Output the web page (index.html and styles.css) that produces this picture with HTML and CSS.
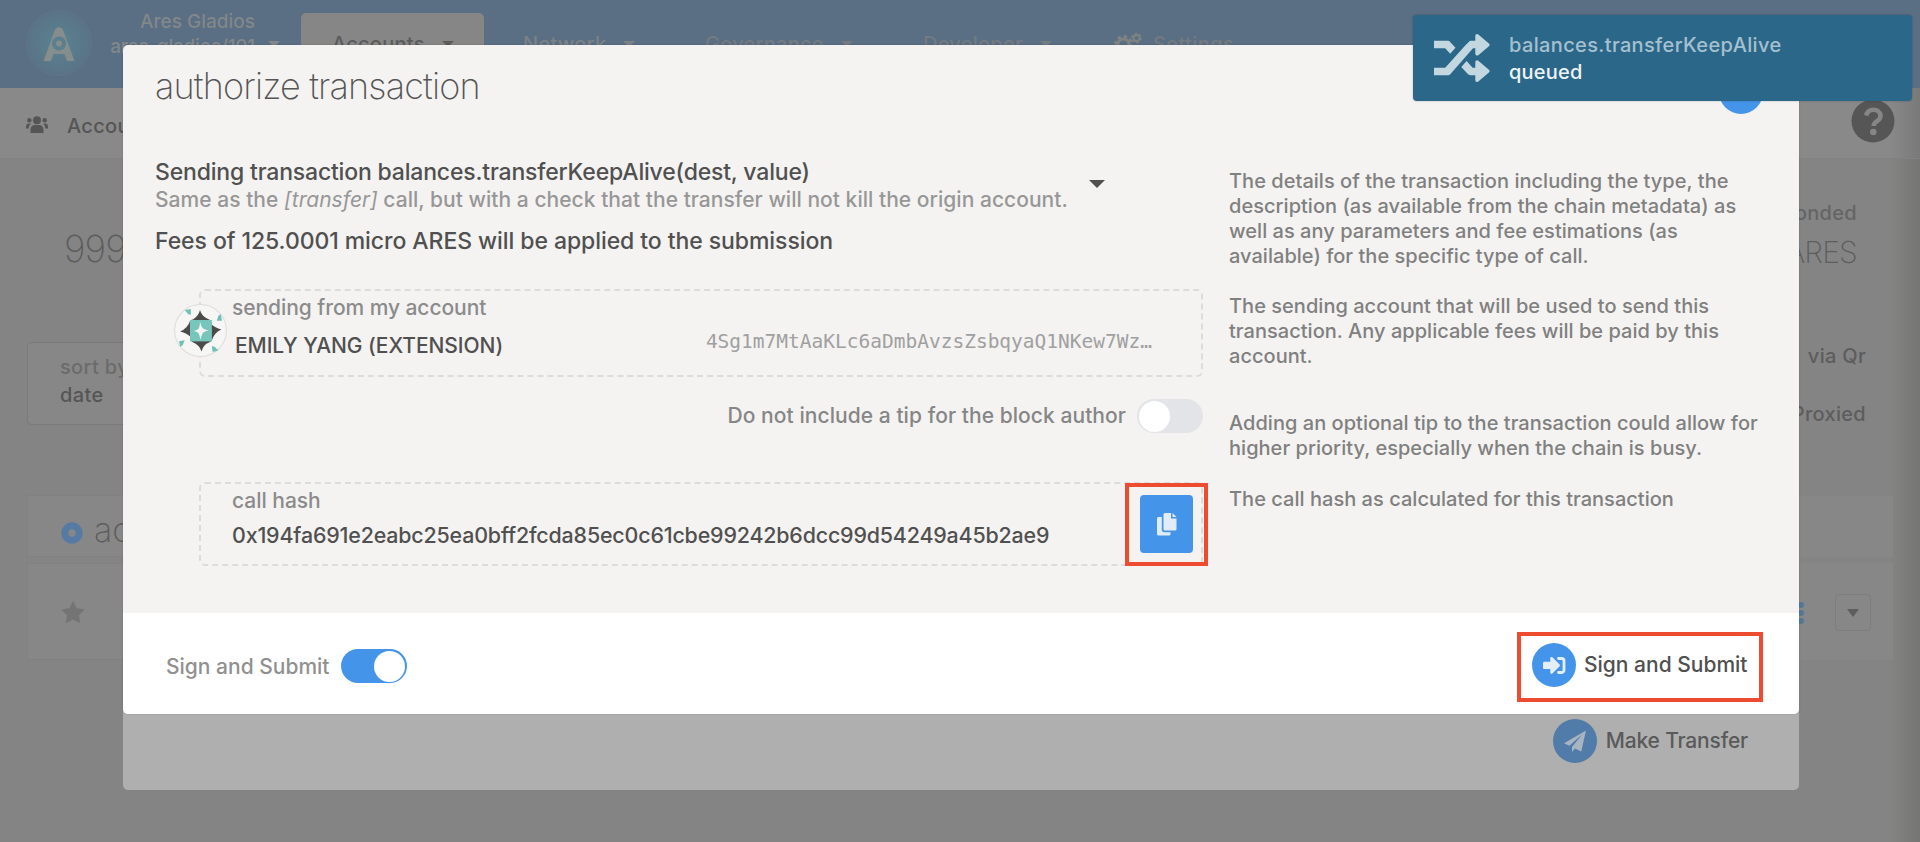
FILE: index.html
```html
<!DOCTYPE html>
<html lang="en">
<head>
<meta charset="utf-8">
<title>authorize transaction</title>
<link rel="stylesheet" href="styles.css">
</head>
<body>
<div class="stage">
  <div class="page">
    <header class="topbar">
      <svg class="logo" viewBox="0 0 66 66"><defs><radialGradient id="lg"><stop offset="0" stop-color="#5a8391"/><stop offset=".6" stop-color="#597a8b"/><stop offset="1" stop-color="#5b7287"/></radialGradient></defs><circle cx="33" cy="33" r="32.5" fill="url(#lg)" stroke="#64778a" stroke-width=".7"/><path d="M28.500 21c1.500-5 7.500-5 9 0L48.500 51H41l-2.500-7h-11L25 51H17.500z" fill="#868d8d"/><circle cx="33" cy="33.500" r="7" fill="#5a7f8f"/><circle cx="33" cy="33.500" r="3" fill="#868d8d"/></svg>
      <div class="chain"><div class="chain-name">Ares Gladios</div><div class="chain-spec">ares-gladios/101</div></div>
      <i class="caret chain-caret"></i>
      <nav class="menu">
        <div class="menu-item active"><span>Accounts</span><i class="caret"></i></div>
        <div class="menu-item network"><span>Network</span><i class="caret"></i></div>
        <div class="menu-item governance"><span>Governance</span><i class="caret"></i></div>
        <div class="menu-item developer"><span>Developer</span><i class="caret"></i></div>
        <div class="menu-item settings"><svg class="gears" viewBox="0 0 28 26" fill="none" stroke="#7f8381"><circle cx="9.500" cy="12.500" r="5.500" stroke-width="2.800"/><circle cx="9.500" cy="12.500" r="8" stroke-width="2.800" stroke-dasharray="3.400 2.880"/><circle cx="22.500" cy="6" r="3" stroke-width="1.800"/><circle cx="22.500" cy="6" r="4.500" stroke-width="1.600" stroke-dasharray="2.400 2.300"/></svg><span>Settings</span></div>
      </nav>
    </header>
    <div class="tabs">
      <svg class="people" viewBox="0 0 22 17" fill="#555"><circle cx="11" cy="4.300" r="4"/><circle cx="3.300" cy="4.200" r="2.200"/><circle cx="18.700" cy="4.200" r="2.200"/><path d="M4.500 17v-3.500a4.500 4.500 0 0 1 4.500-4.500h4a4.500 4.500 0 0 1 4.500 4.500V17zM0 12.500v-2.500A2.600 2.600 0 0 1 2.600 7.500h2.400c-1.500 1.300-2.300 3-2.300 5zM22 12.500v-2.500a2.600 2.600 0 0 0-2.600-2.500H17c1.500 1.300 2.300 3 2.300 5z"/></svg>
      <span class="tab-label">Accou</span>
      <svg class="help-icon" viewBox="0 0 44 44"><circle cx="22" cy="22" r="21.500" fill="#565656"/><path d="M15 16.500c1.500-4.500 4-5.800 7.300-5.800 4 0 7.200 2.500 7.200 6.200 0 5.500-6.800 5-6.800 10" fill="none" stroke="#868686" stroke-width="4.600"/><circle cx="22.300" cy="33" r="3.300" fill="#868686"/></svg>
    </div>
    <div class="content">
      <aside class="left">
        <div class="total">999</div>
        <div class="sort"><div class="sort-label">sort by</div><div class="sort-value">date</div></div>
        <div class="panel panel-head"><svg class="radio" viewBox="0 0 22 22"><circle cx="11" cy="11" r="7.200" fill="none" stroke="#557ba5" stroke-width="7"/></svg><span class="panel-title">ac</span></div>
        <div class="panel panel-row"><svg class="star" viewBox="0 0 24 23"><path d="M12 0l3.700 7.300 8.100 1.200-5.900 5.700 1.400 8.100L12 18.500l-7.300 3.800 1.400-8.100L.2 8.500l8.100-1.200z" fill="#747474"/></svg></div>
      </aside>
      <aside class="right">
        <div class="bonded-label">onded</div>
        <div class="bonded-value">ARES</div>
        <div class="via">via Qr</div>
        <div class="proxied">Proxied</div>
        <div class="panel panel-head"></div>
        <div class="panel panel-row right-row"><div class="dots"><b></b><b></b><b></b></div><div class="drop"><i class="caret"></i></div></div>
      </aside>
    </div>
  </div>

  <div class="back-modal">
    <svg class="round" viewBox="0 0 44 44"><circle cx="22" cy="22" r="22" fill="#517ba8"/><path d="M33 11.500L11 24.200l5.400 2.500L29 15.500 19 28v5l3-3.500 6.300 3z" fill="#a7b4c2"/></svg>
    <span>Make Transfer</span>
  </div>

  <main class="modal">
    <div class="modal-head"><h1>authorize transaction</h1><div class="close"></div></div>
    <div class="modal-body">
      <section class="call">
        <div class="summary">
          <div class="lead">Sending transaction balances.transferKeepAlive(dest, value)</div>
          <div class="desc">Same as the <em>[transfer]</em> call, but with a check that the transfer will not kill the origin account.</div>
          <div class="fees">Fees of 125.0001 micro ARES will be applied to the submission</div>
        </div>
        <i class="caret call-caret"></i>
      </section>
      <p class="help h1">The details of the transaction including the type, the<br>description (as available from the chain metadata) as<br>well as any parameters and fee estimations (as<br>available) for the specific type of call.</p>
      <section class="field account">
        <svg class="identicon" viewBox="0 0 52 52"><circle cx="26" cy="26" r="25.400" fill="#f6f6f5" stroke="#dcdcdc"/><path d="M25.500 6Q27 12.500 35 15.500L37 20Q40 23 46.500 25Q39.500 28 37 36L34 38Q29 39.500 27 46.500Q25 40 17.500 37L16 32Q13 29 6 27Q13.500 24 16 16L19 15Q24 12 25.500 6z" fill="#4b4b4b"/><rect x="15.700" y="15.700" width="21.500" height="21" fill="#77c5bb"/><path d="M25.500 17.500Q27 23 28.500 24Q30 25 34 26Q29 27 28 29Q27 31 26 35Q25 30 24 28.500Q22.500 27 19 26.500Q23.500 25.500 24.500 23.500Q25.500 21 25.500 17.500z" fill="#f4f4f3"/><path d="M10.500 6l6-1v5.500l-2.500-.5zM42 16.500l1.500-5 2.500-1.500 1 6.500zM5 36.500l5.500-1-2 5-2.500 1.500zM37 41.500l3 .5 3.500 3.500-5.500 1.500z" fill="#6fc1b7"/></svg>
        <div class="who"><div class="label">sending from my account</div><div class="name">EMILY YANG (EXTENSION)</div></div>
        <div class="address">4Sg1m7MtAaKLc6aDmbAvzsZsbqyaQ1NKew7Wz…</div>
      </section>
      <p class="help h2">The sending account that will be used to send this<br>transaction. Any applicable fees will be paid by this<br>account.</p>
      <section class="tip"><span>Do not include a tip for the block author</span><div class="toggle"><b></b></div></section>
      <p class="help h3">Adding an optional tip to the transaction could allow for<br>higher priority, especially when the chain is busy.</p>
      <section class="field hash">
        <div><div class="label">call hash</div><div class="hash-value">0x194fa691e2eabc25ea0bff2fcda85ec0c61cbe99242b6dcc99d54249a45b2ae9</div></div>
        <div class="copy-mark"><div class="copy"><svg viewBox="0 0 20 23" fill="#e1ecf8"><path d="M6.500 1.500A1.500 1.500 0 0 1 8 0h6v5.500h5.500V16a1.500 1.500 0 0 1-1.500 1.500H8A1.500 1.500 0 0 1 6.500 16zM15.500 0l4 4h-4z"/><path d="M4.800 4H1.500A1.500 1.500 0 0 0 0 5.500v15.500A1.500 1.500 0 0 0 1.500 22.500H12a1.500 1.500 0 0 0 1.500-1.500v-1.800H7.500A2.700 2.700 0 0 1 4.800 16.500z"/></svg></div></div>
      </section>
      <p class="help h4">The call hash as calculated for this transaction</p>
    </div>
    <footer class="modal-foot">
      <span class="mode">Sign and Submit</span><div class="toggle on"><b></b></div>
      <div class="submit"><svg class="round" viewBox="0 0 44 44"><circle cx="22" cy="22" r="22" fill="#4495ea"/><path d="M12.500 18.800h5.800v-3.600c0-1.300 1.300-1.700 2.100-.9l7.200 7.200c.6.600.6 1.200 0 1.800l-7.200 7.200c-.8.800-2.100.4-2.100-.9v-3.600h-5.800c-1 0-1.500-.5-1.500-1.500v-4.200c0-1 .5-1.500 1.500-1.500z" fill="#e3eefa"/><path d="M26.500 15.500h3.200a2.300 2.300 0 0 1 2.300 2.300v9.400a2.300 2.300 0 0 1-2.300 2.300h-3.200" fill="none" stroke="#e3eefa" stroke-width="2.800" stroke-linecap="round"/></svg><span>Sign and Submit</span></div>
    </footer>
  </main>

  <div class="toast">
    <svg class="shuffle" viewBox="0 0 56 48"><path d="M0 6.800h13.500c1.200 0 1.800.3 2.600 1.100l5.400 5.900-5.300 5.900-5-5.400H0zM0 33.700h11.200L31.200 11.500 34.800 7.900c.7-.8 1.500-1.100 2.500-1.100h4V2c0-2 2-2.600 3.300-1.300l10.300 8.800c1 .9 1 1.800 0 2.700l-10.300 8.800c-1.300 1.200-3.300.6-3.300-1.400v-5.300h-2.300L16.500 40c-.8.900-1.500 1.200-2.600 1.200H0zM27.300 33l5.300-5.900 6 6.600h2.700v-5.500c0-2 2-2.600 3.300-1.300l10.300 8.800c1 .9 1 1.800 0 2.700l-10.300 8.900c-1.300 1.200-3.300.6-3.300-1.400v-4.700h-5c-1 0-1.700-.3-2.500-1.100z" fill="#c3d7e1"/></svg>
    <div><div class="toast-title">balances.transferKeepAlive</div><div class="toast-status">queued</div></div>
  </div>
</div>
</body>
</html>
```
FILE: styles.css
```css
* { box-sizing: border-box; }
body { margin: 0; overflow: hidden; font-family: Inter, "Liberation Sans", sans-serif; font-size: 21px; font-weight: 450; color: #505050; }
h1, p { margin: 0; font-weight: inherit; }
svg { display: block; flex: none; }
.stage { display: grid; grid-template: 842px / 1920px; }
.stage > * { grid-area: 1 / 1; }
.caret { flex: none; width: 0; height: 0; border: solid transparent; border-width: 6px 6px 0; border-top-color: currentColor; }

/* dimmed application page */
.page { background: linear-gradient(90deg, #848484 1890px, #757572 1920px); white-space: nowrap; }
.topbar { display: flex; height: 88px; background: #5a6e84; color: #82878a; padding-left: 26px; }
.logo { width: 66px; height: 66px; margin-top: 10px; }
.chain { width: 163px; padding: 8px 0 0; text-align: right; font-size: 19px; line-height: 27px; }
.chain-spec { line-height: 24px; letter-spacing: -.24px; }
.chain-caret { margin: 41px 0 0 13px; }
.menu { display: flex; margin-left: 21px; font-size: 20px; line-height: 26px; color: #7c8186; }
.menu-item { display: flex; align-items: center; height: 64px; margin-top: 13px; padding-bottom: 3px; letter-spacing: .25px; }
.menu-item .caret { margin-left: 17px; }
.active { width: 183px; padding-left: 31px; background: #868686; border-radius: 5px 5px 0 0; color: #5b5b5b; }
.network { width: 181px; padding-left: 39px; }
.governance { width: 218px; padding-left: 40px; }
.developer { width: 191px; padding-left: 40px; }
.governance, .developer, .settings { color: #737a80; }
.settings { padding-left: 40px; letter-spacing: .4px; }
.gears { width: 28px; height: 26px; margin: 3px 11px 0 0; }
.tabs { display: flex; align-items: flex-start; height: 71px; padding: 0 25px 0 26px; background: linear-gradient(90deg, #898989 1890px, #797979 1920px); border-bottom: 1px solid #818181; }
.people { width: 22px; height: 17px; margin-top: 28px; }
.tab-label { margin: 25px auto 0 19px; font-size: 20px; line-height: 26px; letter-spacing: .3px; color: #555; }
.help-icon { width: 44px; height: 44px; margin-top: 11px; }
.content { display: flex; justify-content: space-between; height: 683px; color: #5d5d5d; }
.left { width: 96px; margin-left: 27px; }
.total { height: 182.500px; padding: 66px 0 0 37px; font-size: 37px; font-weight: 200; line-height: 48px; letter-spacing: -1px; }
.sort { height: 83px; padding: 10px 0 0 32px; border: 1px solid #7a7a7a; border-right: 0; border-radius: 5px 0 0 5px; background: #878787; font-size: 20px; line-height: 28px; letter-spacing: .35px; }
.sort-label { color: #6b6b6b; }
.sort-value { color: #555; }
.panel { background: #878787; border: 1px solid #818181; border-right: 0; }
.panel-head { display: flex; height: 62px; margin-top: 70.500px; }
.radio { width: 22px; height: 22px; margin: 26px 11px 0 33px; }
.panel-title { margin-top: 13px; font-size: 34px; font-weight: 250; line-height: 42px; }
.panel-row { height: 97px; margin-top: 6px; }
.star { width: 24px; height: 23px; margin: 37px 0 0 33px; }
.right { width: 125px; margin-right: 26px; text-align: right; font-size: 20px; line-height: 26px; letter-spacing: .3px; }
.bonded-label { padding: 41px 37px 0 0; color: #646464; }
.bonded-value { padding: 7px 37px 0 0; line-height: 38px; font-size: 30px; font-weight: 200; letter-spacing: -.8px; }
.via { padding: 72px 28px 0 0; }
.proxied { padding: 32px 28px 0 0; }
.right .panel { border: 0; border-right: 1px solid #828282; }
.right .panel-head { height: 61px; margin-top: 69px; }
.right-row { display: flex; align-items: flex-start; justify-content: flex-end; padding: 31px 22px 0 0; }
.dots { display: grid; gap: 2px; margin: 8px 31px 0 0; }
.dots b { width: 6px; height: 6px; border-radius: 50%; background: #527799; }
.drop { display: grid; place-items: center; width: 36px; height: 37px; border: 1px solid #7d7d7d; border-radius: 4px; }
.drop .caret { border-width: 8px 6px 0; }

/* dialogs */
.back-modal { display: flex; align-items: flex-start; justify-content: flex-end; width: 1676px; height: 90px; margin: 700px 0 0 123px; padding: 19px 51px 0 0; border-radius: 0 0 5px 5px; background: #afafaf; color: #5a5a5a; line-height: 44px; }
.back-modal span { letter-spacing: -.18px; }
.round { width: 44px; height: 44px; margin-right: 9px; }
.modal { width: 1676px; height: 669px; margin: 45px 0 0 123px; border-radius: 5px; overflow: hidden; background: #f4f3f1; white-space: nowrap; box-shadow: 0 0 2px rgba(0,0,0,.18); }
.modal-head { display: flex; justify-content: space-between; height: 114px; padding: 17px 36px 0 32px; }
.modal-head h1 { font-size: 36px; font-weight: 230; line-height: 48px; letter-spacing: -.83px; color: #555; }
.close { width: 44px; height: 44px; margin-top: 8px; border-radius: 50%; background: #4495ea; }
.modal-body { display: grid; grid-template: 130px 109px 84px 131px / 1048px 1fr; column-gap: 26px; padding-left: 32px; }
.call { display: flex; justify-content: space-between; padding-right: 98px; }
.lead { font-size: 23px; line-height: 27px; letter-spacing: -.18px; }
.desc { font-size: 21px; line-height: 27px; letter-spacing: .03px; color: #979797; }
.fees { margin-top: 14px; font-size: 23px; line-height: 28px; letter-spacing: -.07px; }
.call-caret { margin-top: 21px; border-width: 8px 8px 0; }
.help { font-size: 20px; line-height: 25px; letter-spacing: .03px; color: #808080; }
.h1 { padding-top: 10px; }
.h2 { padding-top: 5px; }
.h3 { padding-top: 13px; }
.h4 { padding-top: 5px; }
.field { display: flex; margin-left: 44px; border: 2px dashed #dddcdb; border-radius: 6px; }
.account { height: 88px; padding-right: 49px; }
.identicon { width: 53px; height: 53px; margin: 13px 5px 0 -27px; }
.label { line-height: 26px; letter-spacing: -.03px; color: #8b8b8b; }
.account .label { padding-top: 4px; letter-spacing: -.06px; }
.name { padding: 12px 0 0 3px; line-height: 26px; letter-spacing: -.06px; }
.address { margin: 38px 0 0 auto; font: 19.500px/26px "DejaVu Sans Mono", monospace; color: #a0a0a0; }
.tip { display: flex; justify-content: flex-end; align-items: center; height: 36px; line-height: 34px; letter-spacing: .06px; color: #868686; }
.toggle { width: 66px; height: 34px; margin-left: 11px; padding: 1.500px; border-radius: 17px; background: #e2e4e7; }
.toggle b { display: block; width: 31px; height: 31px; border-radius: 50%; background: #fff; }
.on { background: #4495ea; }
.on b { margin-left: auto; }
.hash { height: 84px; padding-left: 31px; }
.hash .label { padding-top: 4px; }
.hash-value { margin-top: 8px; font-size: 21.400px; line-height: 26px; letter-spacing: -.16px; }
.copy-mark { display: grid; place-items: center; width: 83px; height: 83px; margin: -1.500px -7px 0 auto; border: 4px solid #ee4c30; }
.copy { display: grid; place-items: center; width: 53px; height: 58px; border-radius: 4px; background: #4495ea; }
.copy svg { width: 20px; height: 23px; }
.modal-foot { display: flex; align-items: flex-start; height: 101px; padding: 19px 36px 0 43px; background: #fff; line-height: 44px; }
.mode { margin-top: 13px; color: #909090; }
.modal-foot .toggle { margin-top: 17px; }
.submit { display: flex; width: 246px; height: 70px; margin-left: auto; padding: 7px 0 0 11px; border: 4px solid #ee4c30; }
.submit .round { margin-right: 8px; }

/* status notification */
.toast { display: flex; width: 499px; height: 86px; margin: 15px 0 0 1413px; padding: 19px 21px; border-radius: 4px; background: #2b6789; box-shadow: 0 0 2px rgba(0,0,0,.3); color: #eef4f7; line-height: 27px; font-size: 20px; }
.shuffle { width: 56px; height: 48px; margin-right: 19px; }
.toast > div { margin-top: -2px; }
.toast-title { color: #a5c0cf; letter-spacing: .36px; }
.toast-status { font-weight: 550; letter-spacing: .2px; }
```
